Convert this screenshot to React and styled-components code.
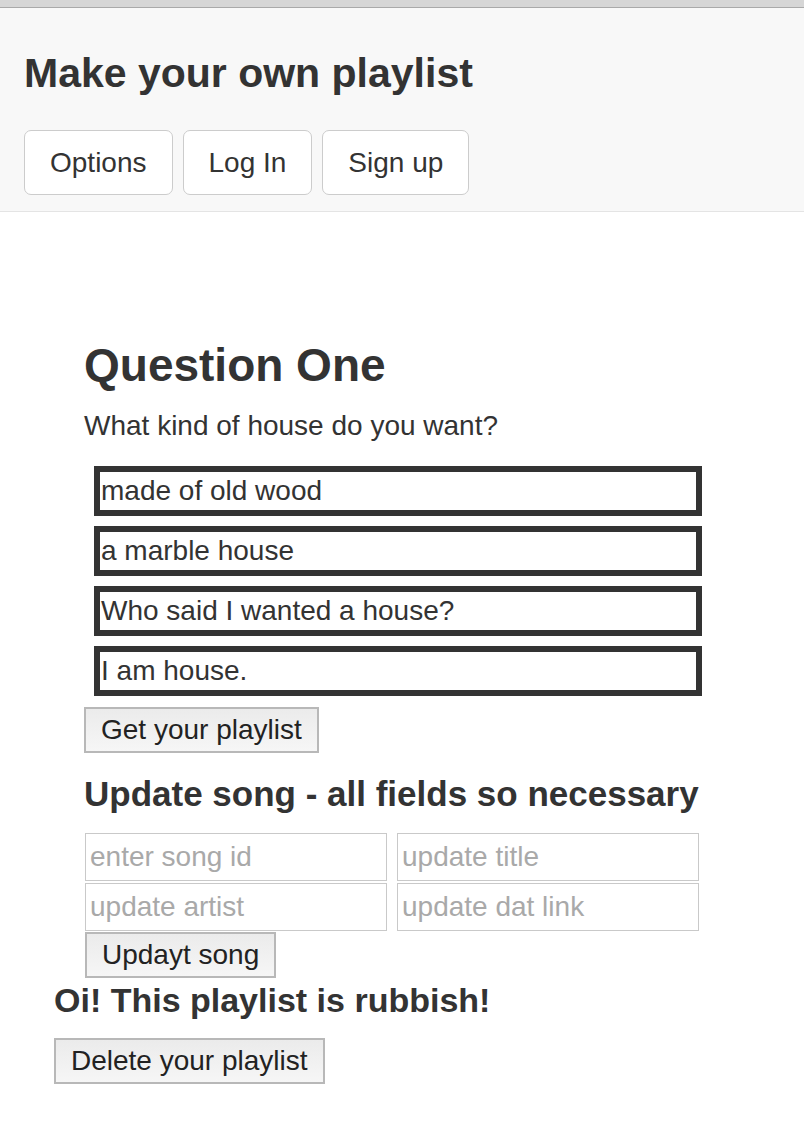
import React from "react";
import styled, { createGlobalStyle } from "styled-components";

const GlobalStyle = createGlobalStyle`
  html, body {
    margin: 0;
    padding: 0;
    background: #fff;
  }
  body {
    font-family: "Liberation Sans", Arial, Helvetica, sans-serif;
    color: #333;
  }
  * {
    box-sizing: border-box;
  }
`;

const TopBar = styled.div`
  height: 8px;
  background: #d6d6d6;
  border-bottom: 1px solid #a9a9a9;
`;

const Header = styled.header`
  background: #f8f8f8;
  padding: 42px 24px 16px;
  border-bottom: 1px solid #e4e4e4;
`;

const Title = styled.h1`
  margin: 0 0 34px;
  font-size: 41px;
  line-height: 46px;
  font-weight: 700;
  color: #333;
`;

const NavRow = styled.nav`
  display: flex;
  gap: 10px;
`;

const NavButton = styled.button`
  height: 65px;
  padding: 0 25px;
  border: 1px solid #ccc;
  border-radius: 7px;
  background: #fff;
  font-family: inherit;
  font-size: 28px;
  color: #333;
  cursor: pointer;
`;

const Main = styled.main`
  padding: 127px 0 40px 54px;
`;

const Quiz = styled.section`
  margin-left: 30px;
  width: 620px;
`;

const QuestionTitle = styled.h2`
  margin: 0;
  font-size: 46px;
  line-height: 52px;
  font-weight: 700;
  color: #333;
`;

const Prompt = styled.p`
  margin: 15px 0 20px;
  font-size: 28px;
  line-height: 40px;
  color: #333;
`;

const Answers = styled.div`
  display: flex;
  flex-direction: column;
  gap: 10px;
  margin-left: 10px;
  width: 608px;
`;

const Answer = styled.div`
  height: 50px;
  border: 6px solid #333;
  padding: 0 1px;
  font-size: 28px;
  line-height: 38px;
  color: #333;
  background: #fff;
  white-space: nowrap;
`;

const GreyButton = styled.button`
  display: block;
  height: 46px;
  margin-top: ${(p) => p.$top || 0}px;
  margin-left: ${(p) => p.$left || 0}px;
  padding: 0 15px;
  border: 2px solid #b8b8b8;
  border-radius: 0;
  background: linear-gradient(to bottom, #ebebeb, #f6f6f6);
  font-family: inherit;
  font-size: 28px;
  line-height: 42px;
  color: #222;
  cursor: pointer;
`;

const SubTitle = styled.h3`
  margin: 21px 0 19px;
  font-size: 35px;
  line-height: 40px;
  font-weight: 700;
  color: #333;
  white-space: nowrap;
`;

const FieldGrid = styled.div`
  display: grid;
  grid-template-columns: 302px 302px;
  column-gap: 10px;
  row-gap: 2px;
  padding-left: 1px;
`;

const Field = styled.input`
  height: 48px;
  width: 100%;
  border: 1px solid #c9c9c9;
  padding: 0 4px;
  font-family: inherit;
  font-size: 28px;
  color: #333;
  outline: none;

  &::placeholder {
    color: #a9a9a9;
  }
`;

const DangerTitle = styled.h3`
  margin: 2px 0 0;
  font-size: 34px;
  line-height: 40px;
  font-weight: 700;
  color: #333;
`;

const answers = [
  "made of old wood",
  "a marble house",
  "Who said I wanted a house?",
  "I am house.",
];

const fields = ["enter song id", "update title", "update artist", "update dat link"];

export default function App() {
  return (
    <>
      <GlobalStyle />
      <TopBar />
      <Header>
        <Title>Make your own playlist</Title>
        <NavRow>
          <NavButton>Options</NavButton>
          <NavButton>Log In</NavButton>
          <NavButton>Sign up</NavButton>
        </NavRow>
      </Header>
      <Main>
        <Quiz>
          <QuestionTitle>Question One</QuestionTitle>
          <Prompt>What kind of house do you want?</Prompt>
          <Answers>
            {answers.map((a) => (
              <Answer key={a}>{a}</Answer>
            ))}
          </Answers>
          <GreyButton $top={11}>Get your playlist</GreyButton>
          <SubTitle>Update song - all fields so necessary</SubTitle>
          <FieldGrid>
            {fields.map((f) => (
              <Field key={f} placeholder={f} />
            ))}
          </FieldGrid>
          <GreyButton $top={1} $left={1}>Updayt song</GreyButton>
        </Quiz>
        <DangerTitle>Oi! This playlist is rubbish!</DangerTitle>
        <GreyButton $top={18}>Delete your playlist</GreyButton>
      </Main>
    </>
  );
}
